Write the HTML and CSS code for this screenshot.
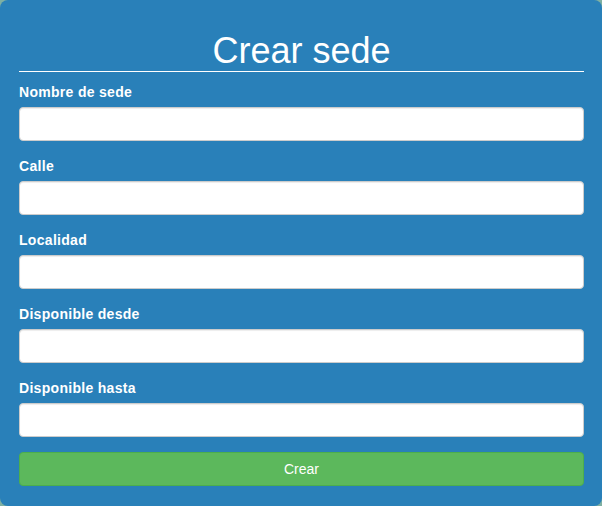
FILE: index.html
```html
<!DOCTYPE html>
<html lang="es">
<head>
<meta charset="utf-8">
<title>Crear sede</title>
<link rel="stylesheet" href="styles.css">
</head>
<body>
<div class="panel">
  <h1 class="title">Crear sede</h1>
  <form class="form">
    <div class="group">
      <label class="label" for="nombre">Nombre de sede</label>
      <input class="input" id="nombre" type="text">
    </div>
    <div class="group">
      <label class="label" for="calle">Calle</label>
      <input class="input" id="calle" type="text">
    </div>
    <div class="group">
      <label class="label" for="localidad">Localidad</label>
      <input class="input" id="localidad" type="text">
    </div>
    <div class="group">
      <label class="label" for="desde">Disponible desde</label>
      <input class="input" id="desde" type="text">
    </div>
    <div class="group">
      <label class="label" for="hasta">Disponible hasta</label>
      <input class="input" id="hasta" type="text">
    </div>
    <button class="btn" type="button">Crear</button>
  </form>
</div>
</body>
</html>
```

FILE: styles.css
```css
html, body {
  margin: 0;
  padding: 0;
  background: #7fb0a2;
}
body {
  font-family: "Liberation Sans", Arial, sans-serif;
  font-size: 14px;
  line-height: 20px;
  color: #fff;
}
.panel {
  box-sizing: border-box;
  width: 602px;
  height: 506px;
  background: #2980b9;
  border-radius: 8px;
  padding: 31px 18px 0 19px;
}
.title {
  margin: 0;
  font-size: 36px;
  font-weight: 400;
  line-height: 40px;
  text-align: center;
  border-bottom: 1px solid #fff;
}
.form {
  display: flex;
  flex-direction: column;
  gap: 15px;
  margin-top: 10px;
}
.group {
  display: flex;
  flex-direction: column;
}
.label {
  font-weight: 700;
  font-size: 14px;
  line-height: 20px;
  letter-spacing: 0.3px;
  margin-bottom: 5px;
}
.input {
  box-sizing: border-box;
  height: 34px;
  width: 100%;
  margin: 0;
  background: #fff;
  border: 1px solid #ccc;
  border-radius: 4px;
  box-shadow: inset 0 1px 1px rgba(0,0,0,.075);
  font-family: inherit;
  font-size: 14px;
  padding: 6px 12px;
}
.btn {
  box-sizing: border-box;
  height: 34px;
  width: 100%;
  margin: 0;
  background: #5cb85c;
  border: 1px solid #4cae4c;
  border-radius: 4px;
  color: #fff;
  font-family: inherit;
  font-size: 14px;
  line-height: 20px;
  padding: 6px 12px;
}
```
